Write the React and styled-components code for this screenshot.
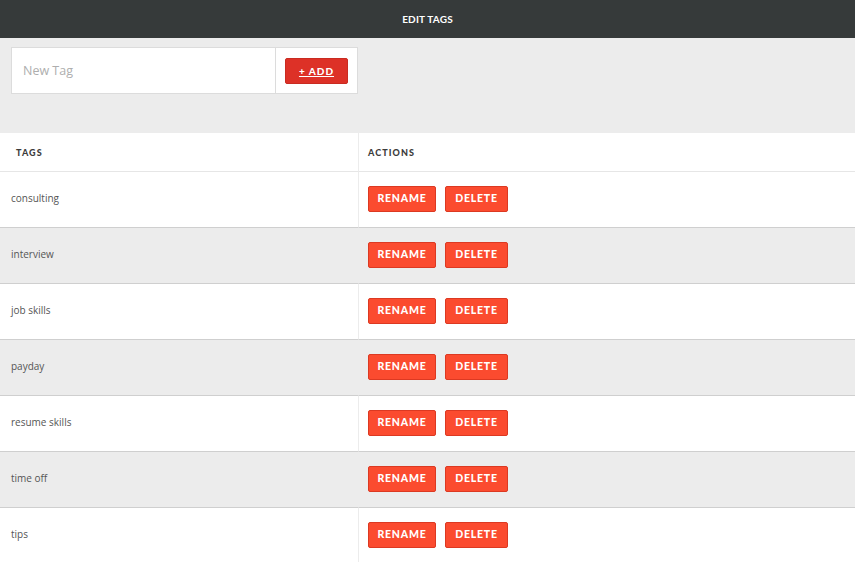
import React from 'react'
import styled, { createGlobalStyle } from 'styled-components'

const GlobalStyle = createGlobalStyle`
  body {
    margin: 0;
    background: #fff;
    font-family: Lato, "Open Sans", sans-serif;
  }
`

const Header = styled.header`
  height: 38px;
  background: #363a3a;
  color: #fff;
  display: flex;
  align-items: center;
  justify-content: center;
  font-size: 10px;
  font-weight: 700;
  letter-spacing: 0.2px;
`

const AddArea = styled.div`
  background: #ececec;
  height: 95px;
  padding: 9px 11px 0;
  box-sizing: border-box;
`

const AddBox = styled.div`
  width: 347px;
  height: 47px;
  box-sizing: border-box;
  background: #fff;
  border: 1px solid #dcdcdc;
  display: flex;
`

const Input = styled.input`
  width: 264px;
  box-sizing: border-box;
  border: none;
  border-right: 1px solid #dcdcdc;
  padding: 0 11px;
  font-family: "Open Sans", sans-serif;
  font-size: 12.5px;
  color: #333;
  outline: none;
  &::placeholder {
    color: #aeaeae;
  }
`

const AddCell = styled.div`
  flex: 1;
  display: flex;
  align-items: center;
  padding-left: 9px;
`

const AddButton = styled.button`
  width: 63px;
  height: 26px;
  background: #dd3127;
  border: 1px solid #c92b21;
  border-radius: 2px;
  color: #fff;
  font-family: Lato, sans-serif;
  font-weight: 900;
  font-size: 10px;
  letter-spacing: 1px;
  text-decoration: underline;
  padding: 0;
`

const Table = styled.div`
  display: grid;
  grid-template-columns: 358px 1fr;
`

const HeadCell = styled.div`
  height: 39px;
  display: flex;
  align-items: center;
  padding-left: ${p => p.$pad}px;
  font-size: 9px;
  font-weight: 900;
  letter-spacing: 1.1px;
  color: #3c3c3c;
  border-bottom: 1px solid #e6e6e6;
  border-left: ${p => (p.$divider ? '1px solid #ececec' : 'none')};
  box-sizing: border-box;
`

const Cell = styled.div`
  height: 56px;
  box-sizing: border-box;
  display: flex;
  align-items: center;
  background: ${p => (p.$odd ? '#ececec' : '#fff')};
  border-bottom: 1px solid #cfcfcf;
  border-left: ${p => (p.$divider ? '1px solid #ececec' : 'none')};
  padding-left: ${p => p.$pad}px;
  padding-bottom: 3px;
  gap: 9px;
  font-family: "Open Sans", sans-serif;
  font-size: 10px;
  color: #555;
`

const ActionButton = styled.button`
  height: 26px;
  width: ${p => p.$w}px;
  background: #fb4b2f;
  border: 1px solid #dc3922;
  border-radius: 2px;
  color: #fff;
  font-family: Lato, sans-serif;
  font-weight: 900;
  font-size: 10.5px;
  letter-spacing: 0.8px;
  padding: 0 0 1px;
  margin-top: 1px;
`

const tags = ['consulting', 'interview', 'job skills', 'payday', 'resume skills', 'time off', 'tips']

export default function App() {
  return (
    <>
      <GlobalStyle />
      <Header>EDIT TAGS</Header>
      <AddArea>
        <AddBox>
          <Input placeholder="New Tag" />
          <AddCell>
            <AddButton>+ ADD</AddButton>
          </AddCell>
        </AddBox>
      </AddArea>
      <Table>
        <HeadCell $pad={16}>TAGS</HeadCell>
        <HeadCell $pad={9} $divider>ACTIONS</HeadCell>
        {tags.map((t, i) => (
          <React.Fragment key={t}>
            <Cell $pad={11} $odd={i % 2 === 1}>{t}</Cell>
            <Cell $pad={9} $odd={i % 2 === 1} $divider>
              <ActionButton $w={68}>RENAME</ActionButton>
              <ActionButton $w={63}>DELETE</ActionButton>
            </Cell>
          </React.Fragment>
        ))}
      </Table>
    </>
  )
}
